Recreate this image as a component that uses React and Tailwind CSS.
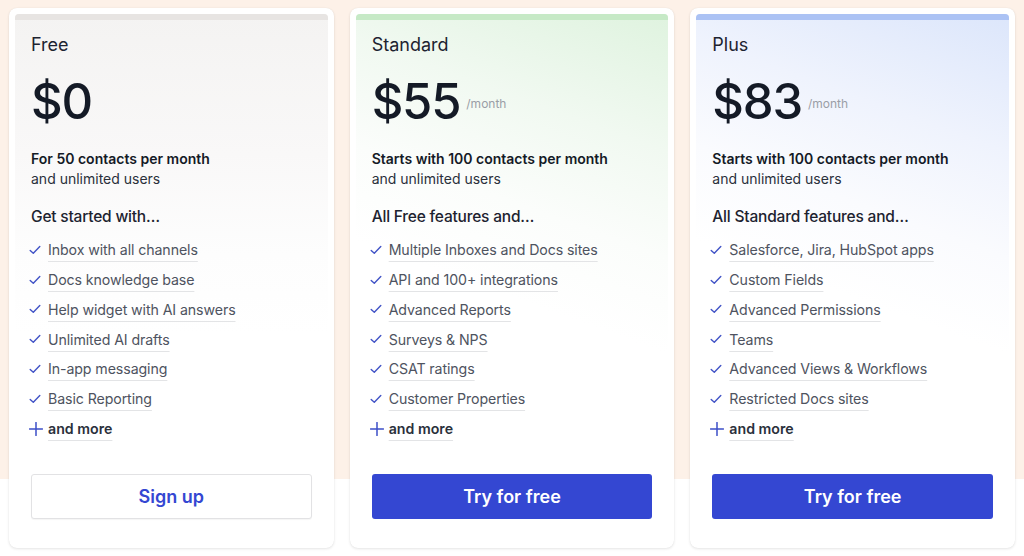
import React from "react";

const plans = [
  {
    name: "Free",
    price: "$0",
    month: false,
    lead: "For 50 contacts per month",
    sub: "and unlimited users",
    heading: "Get started with…",
    items: [
      "Inbox with all channels",
      "Docs knowledge base",
      "Help widget with AI answers",
      "Unlimited AI drafts",
      "In-app messaging",
      "Basic Reporting",
    ],
    cta: "Sign up",
    primary: false,
    bar: "bg-[#e7e4e2]",
    panel: "bg-[linear-gradient(to_bottom,#f4f3f2_0px,#f9f8f8_140px,#fdfdfd_240px,#ffffff_320px)]",
  },
  {
    name: "Standard",
    price: "$55",
    month: true,
    lead: "Starts with 100 contacts per month",
    sub: "and unlimited users",
    heading: "All Free features and…",
    items: [
      "Multiple Inboxes and Docs sites",
      "API and 100+ integrations",
      "Advanced Reports",
      "Surveys & NPS",
      "CSAT ratings",
      "Customer Properties",
    ],
    cta: "Try for free",
    primary: true,
    bar: "bg-[#c6e9c6]",
    panel: "bg-[linear-gradient(200deg,#dff3df_0px,#f1f9f1_130px,#fbfdfb_230px,#ffffff_320px)]",
  },
  {
    name: "Plus",
    price: "$83",
    month: true,
    lead: "Starts with 100 contacts per month",
    sub: "and unlimited users",
    heading: "All Standard features and…",
    items: [
      "Salesforce, Jira, HubSpot apps",
      "Custom Fields",
      "Advanced Permissions",
      "Teams",
      "Advanced Views & Workflows",
      "Restricted Docs sites",
    ],
    cta: "Try for free",
    primary: true,
    bar: "bg-[#abc2f4]",
    panel: "bg-[linear-gradient(200deg,#dce6fb_0px,#eff3fd_130px,#fafbfe_230px,#ffffff_320px)]",
  },
];

function CheckIcon() {
  return (
    <svg width="12" height="12" viewBox="0 0 12 12" fill="none" className="shrink-0">
      <path d="M1.2 6.4 L4.3 9.3 L10.8 2.6" stroke="#4153c6" strokeWidth="1.4" strokeLinecap="round" strokeLinejoin="round" />
    </svg>
  );
}

function PlusIcon() {
  return (
    <svg width="14" height="14" viewBox="0 0 14 14" fill="none" className="shrink-0">
      <path d="M7 0.5 V13.5 M0.5 7 H13.5" stroke="#3d4fc8" strokeWidth="1.5" strokeLinecap="round" />
    </svg>
  );
}

function Card({ p }) {
  return (
    <div className="bg-white rounded-lg shadow-[0_1px_3px_rgba(0,0,0,0.10),0_0_1px_rgba(0,0,0,0.08)] p-[6px] h-[540px] flex flex-col">
      <div className={`flex-1 rounded-[4px] ${p.panel} flex flex-col`}>
        <div className={`h-[6px] rounded-t-[4px] ${p.bar}`} />
        <div className="px-4 pt-[11px] flex flex-col flex-1">
          <div className="text-[18px] leading-[28px] text-[#1d2330]">{p.name}</div>
          <div className="flex items-center mt-[17px] h-[52px]">
            <span className="text-[49px] leading-[52px] font-medium tracking-[-1.2px] text-[#141a26]">{p.price}</span>
            {p.month && <span className="ml-[6px] mt-[3px] text-[12px] text-[#9a9ea6]">/month</span>}
          </div>
          <div className="mt-[21px] text-[14px] leading-[20px] font-semibold text-[#141a26]">{p.lead}</div>
          <div className="text-[14px] leading-[20px] text-[#2a303b]">{p.sub}</div>
          <div className="mt-[16px] text-[15.5px] leading-[24px] font-medium tracking-[-0.2px] text-[#1d2330]">{p.heading}</div>
          <div className="flex flex-col mt-[6px] -ml-[2px]">
            {p.items.map((it) => (
              <div key={it} className="flex items-center h-[29.8px] gap-[7px]">
                <CheckIcon />
                <span className="text-[14.2px] tracking-[-0.1px] text-[#4e5360] underline decoration-[#e3e4e6] decoration-1 underline-offset-[6px]">{it}</span>
              </div>
            ))}
            <div className="flex items-center h-[29.8px] gap-[5px]">
              <PlusIcon />
              <span className="text-[14.2px] font-semibold text-[#2a303b] underline decoration-[#e3e4e6] decoration-1 underline-offset-[6px]">and more</span>
            </div>
          </div>
          <div className="mt-auto pb-[23px]">
            {p.primary ? (
              <button className="w-full h-[45px] rounded-[3px] bg-[#3447d2] text-white text-[18px] font-semibold">{p.cta}</button>
            ) : (
              <button className="w-full h-[45px] rounded-[3px] bg-white border border-[#e2e2e4] shadow-[0_1px_1px_rgba(0,0,0,0.04)] text-[#3447d2] text-[18px] font-semibold">{p.cta}</button>
            )}
          </div>
        </div>
      </div>
    </div>
  );
}

export default function App() {
  return (
    <div
      className="w-[1024px] h-[556px] bg-[linear-gradient(to_bottom,#fdf1e8_0px,#fdf1e8_479px,#ffffff_479px)] px-[9px] pt-[8px] grid grid-cols-3 gap-4 items-start"
      style={{ fontFamily: "Inter, 'Noto Sans', sans-serif" }}
    >
      {plans.map((p) => (
        <Card key={p.name} p={p} />
      ))}
    </div>
  );
}
